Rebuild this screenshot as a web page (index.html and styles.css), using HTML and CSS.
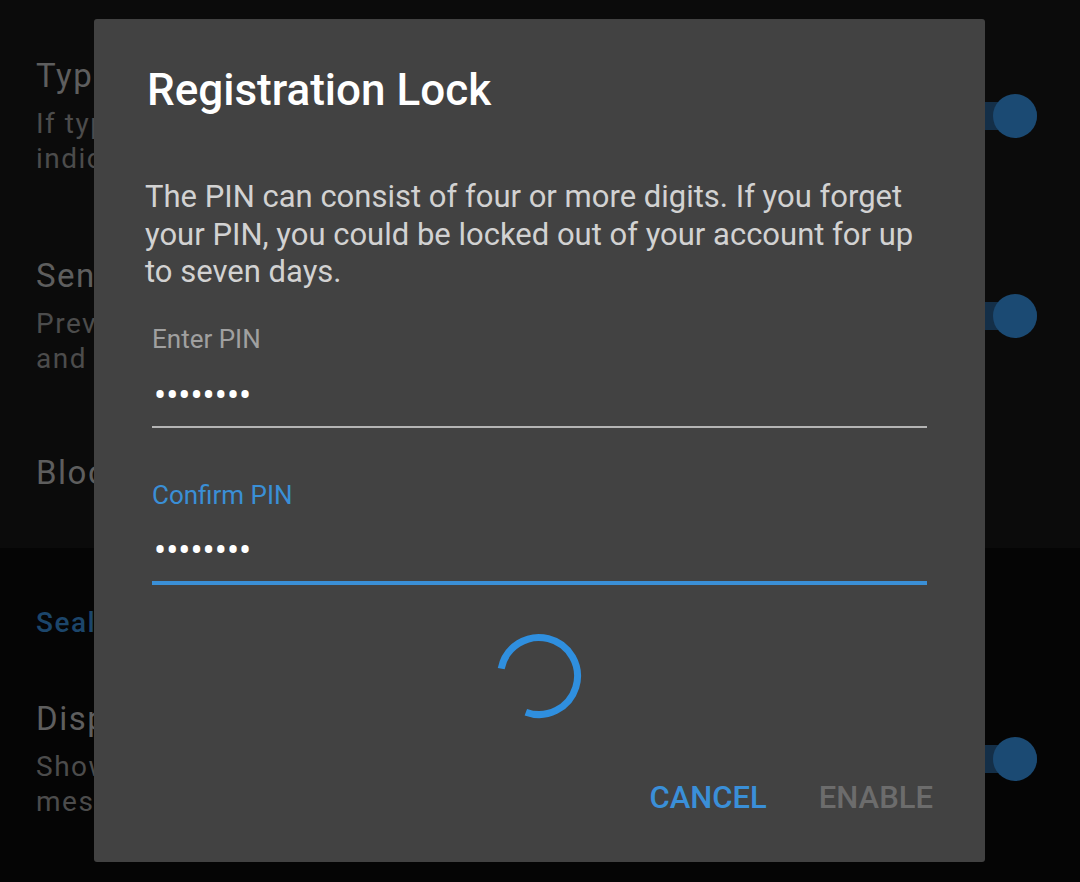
FILE: index.html
```html
<!DOCTYPE html>
<html lang="en">
<head>
  <meta charset="UTF-8">
  <title>Privacy - Registration Lock</title>
  <meta name="viewport" content="width=device-width, initial-scale=1.0">
  <link rel="stylesheet" href="styles.css">
</head>
<body>

  <div class="screen">
    <div class="prefs">
      <div class="pref">
        <div class="pref-text">
          <div class="pref-title">Typing indicators</div>
          <div class="pref-summary">If typing indicators are disabled, you won't be able to see<br>indicators from others.</div>
        </div>
        <div class="switch"><span class="thumb"></span></div>
      </div>
      <div class="pref">
        <div class="pref-text">
          <div class="pref-title">Send link previews</div>
          <div class="pref-summary">Previews are supported for Imgur, Instagram, Pinterest, Reddit,<br>and YouTube links</div>
        </div>
        <div class="switch"><span class="thumb"></span></div>
      </div>
      <div class="pref pref-single">
        <div class="pref-text">
          <div class="pref-title">Blocked users</div>
        </div>
      </div>
    </div>

    <div class="prefs prefs-section">
      <div class="section-title">Sealed sender</div>
      <div class="pref pref-last">
        <div class="pref-text">
          <div class="pref-title">Display indicators</div>
          <div class="pref-summary">Show a status icon when you select "Message details" on<br>messages that were delivered using sealed sender.</div>
        </div>
        <div class="switch"><span class="thumb"></span></div>
      </div>
    </div>

    <div class="dialog">
      <h2 class="dialog-title">Registration Lock</h2>
      <p class="dialog-message">The PIN can consist of four or more digits. If you forget your PIN, you could be locked out of your account for up to seven days.</p>

      <div class="field">
        <label class="field-label">Enter PIN</label>
        <div class="field-input">••••••••</div>
      </div>

      <div class="field field-focused">
        <label class="field-label">Confirm PIN</label>
        <div class="field-input">••••••••</div>
      </div>

      <div class="spinner">
        <svg width="90" height="90" viewBox="0 0 90 90">
          <path d="M7.21 37.65 A38.5 38.5 0 1 1 31.83 81.18" fill="none" stroke="#2f8fdf" stroke-width="7"/>
        </svg>
      </div>

      <div class="dialog-actions">
        <button class="btn btn-cancel">Cancel</button>
        <button class="btn btn-disabled">Enable</button>
      </div>
    </div>
  </div>

</body>
</html>
```

FILE: styles.css
```css
body {
  margin: 0;
  padding: 0;
  background: #050505;
  font-family: Roboto, 'Noto Sans', sans-serif;
  overflow: hidden;
}

.screen {
  position: relative;
  width: 1080px;
  height: 882px;
  overflow: hidden;
}

/* settings list behind the dialog (already dimmed) */
.prefs {
  background: #0b0b0b;
  padding-top: 16px;
  height: 548px;
  box-sizing: border-box;
}

.prefs-section {
  background: #050505;
  padding-top: 57px;
  height: 334px;
}

.pref {
  display: flex;
  align-items: center;
  padding: 40px 43px 40px 36px;
}

.pref-single {
  padding: 37px 43px 40px 36px;
}

.pref-last {
  padding-top: 58px;
}

.pref-text {
  flex: 1;
  white-space: nowrap;
  overflow: hidden;
}

.pref-title {
  font-size: 33px;
  line-height: 40px;
  letter-spacing: 1.5px;
  color: #5e5e5e;
}

.pref-summary {
  margin-top: 10px;
  font-size: 28px;
  line-height: 35px;
  letter-spacing: 1.5px;
  color: #4c4c4c;
}

.section-title {
  padding-left: 36px;
  font-size: 28px;
  font-weight: 500;
  line-height: 36px;
  letter-spacing: 1.5px;
  color: #1c466b;
}

.switch {
  position: relative;
  width: 72px;
  height: 28px;
  border-radius: 14px;
  background: #142f48;
}

.thumb {
  position: absolute;
  right: 0;
  top: -8px;
  width: 44px;
  height: 44px;
  border-radius: 50%;
  background: #1b4a73;
}

/* dialog */
.dialog {
  position: absolute;
  top: 19px;
  left: 94px;
  width: 891px;
  height: 843px;
  box-sizing: border-box;
  padding: 45px 52px 0 51px;
  background: #424242;
  border-radius: 3px;
}

.dialog-title {
  margin: 0;
  padding-left: 2px;
  font-size: 44px;
  font-weight: 500;
  line-height: 52px;
  color: #ffffff;
}

.dialog-message {
  margin: 62px 0 0;
  font-size: 31px;
  line-height: 37.5px;
  color: #d2d2d2;
}

.field {
  margin: 33px 6px 0 7px;
}

.field + .field {
  margin-top: 52px;
}

.field-label {
  display: block;
  font-size: 26px;
  line-height: 30px;
  color: #a0a0a0;
}

.field-input {
  margin-top: 22px;
  padding: 0 0 10px 2px;
  font-size: 36px;
  line-height: 40px;
  color: #ffffff;
  border-bottom: 2px solid #b4b4b4;
}

.field-focused .field-label {
  color: #3a8fd6;
}

.field-focused .field-input {
  margin-top: 21px;
  border-bottom: 4px solid #3a8fd6;
}

.spinner {
  display: flex;
  justify-content: center;
  margin-top: 46px;
}

.spinner svg {
  display: block;
}

.dialog-actions {
  display: flex;
  justify-content: flex-end;
  gap: 52px;
  margin-top: 57px;
}

.btn {
  padding: 0;
  border: none;
  background: none;
  font-family: Roboto, sans-serif;
  font-size: 31px;
  font-weight: 500;
  line-height: 40px;
  text-transform: uppercase;
  cursor: pointer;
}

.btn-cancel {
  color: #3a8fd8;
}

.btn-disabled {
  color: #6c6c6c;
}
```
